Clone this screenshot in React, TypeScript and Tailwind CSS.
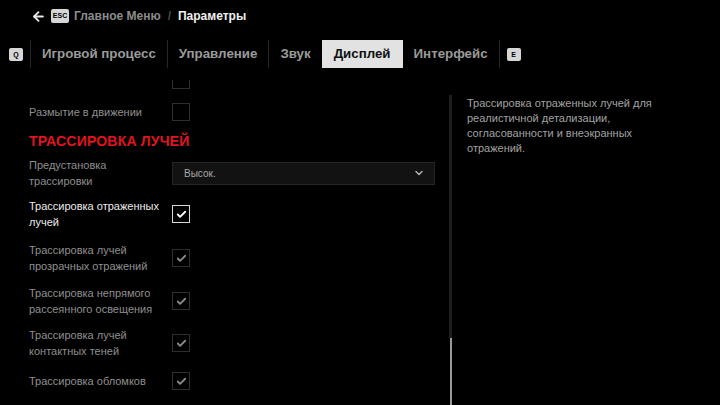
import { ArrowLeft, Check, ChevronDown } from 'lucide-react';

const font = { fontFamily: '"Liberation Sans", Arial, sans-serif' };

function KeyBadge({ label }: { label: string }) {
  return (
    <div className="w-[14px] h-[13px] rounded-[2px] bg-[#d6d6d6] text-black text-[7px] font-bold flex items-center justify-center leading-none">
      {label}
    </div>
  );
}

function Divider() {
  return <div className="w-px h-[28px] bg-[#262626]" />;
}

function Checkbox({ checked, active }: { checked?: boolean; active?: boolean }) {
  return (
    <div
      className={`w-[18px] h-[18px] border flex items-center justify-center shrink-0 ${
        active ? 'border-[#d8d8d8]' : 'border-[#2e2e2e]'
      }`}
    >
      {checked && (
        <Check size={11} strokeWidth={4} className={active ? 'text-white' : 'text-[#8a8a8a]'} />
      )}
    </div>
  );
}

function Row({
  label,
  h,
  checked,
  active,
  className = '',
}: {
  label: React.ReactNode;
  h: string;
  checked?: boolean;
  active?: boolean;
  className?: string;
}) {
  return (
    <div className={`flex items-center ${h} ${className}`}>
      <div className={`w-[143px] text-[11px] leading-[16px] ${active ? 'text-[#ececec]' : 'text-[#8f8f8f]'}`}>
        {label}
      </div>
      <Checkbox checked={checked} active={active} />
    </div>
  );
}

export default function App() {
  const tabs = ['Игровой процесс', 'Управление', 'Звук', 'Дисплей', 'Интерфейс'];
  const activeTab = 'Дисплей';

  return (
    <div className="w-[720px] h-[405px] bg-black overflow-hidden flex flex-col" style={font}>
      <div className="h-[32px] flex items-center pl-[31px] gap-[5px]">
        <ArrowLeft size={15} strokeWidth={3} className="text-[#e8e8e8]" />
        <div className="w-[18px] h-[14px] rounded-[2px] bg-[#d6d6d6] text-black text-[7px] font-bold flex items-center justify-center">
          ESC
        </div>
        <span className="text-[12px] font-bold text-[#8c8c8c]">Главное Меню</span>
        <span className="text-[12px] font-bold text-[#4a4a4a] mx-[2px]">/</span>
        <span className="text-[12px] font-bold text-[#f0f0f0]">Параметры</span>
      </div>

      <div className="h-[28px] mt-[8px] flex items-center pl-[9px]">
        <KeyBadge label="Q" />
        <div className="ml-[7px]" />
        {tabs.map((t, i) => {
          const active = t === activeTab;
          const nextActive = tabs[i + 1] === activeTab;
          return (
            <div key={t} className="flex items-center h-full">
              {!active && i === 0 && <Divider />}
              <div
                className={`h-full flex items-center text-[13.3px] font-bold ${
                  active ? 'bg-[#e2e2e2] text-[#111] px-[12px]' : 'text-[#9a9a9a] px-[11px]'
                }`}
              >
                {t}
              </div>
              {!active && !nextActive && <Divider />}
            </div>
          );
        })}
        <div className="ml-[7px]" />
        <KeyBadge label="E" />
      </div>

      <div className="flex-1 flex mt-[12px] overflow-hidden">
        <div className="w-[449px] pl-[29px] overflow-hidden">
          <Row label="" h="h-[32px]" className="-mt-[16px]" />
          <Row label="Размытие в движении" h="h-[32px]" />
          <div className="h-[26px] flex items-center text-[14px] font-bold text-[#e1141f] tracking-[0.2px]">
            ТРАССИРОВКА ЛУЧЕЙ
          </div>
          <div className="flex items-center h-[38px]">
            <div className="w-[143px] text-[11px] leading-[16px] text-[#8f8f8f]">
              Предустановка
              <br />
              трассировки
            </div>
            <div className="w-[263px] h-[23px] bg-[#121212] border border-[#252525] flex items-center justify-between pl-[11px] pr-[9px]">
              <span className="text-[10px] text-[#a8a8a8]">Высок.</span>
              <ChevronDown size={12} strokeWidth={3} className="text-[#b0b0b0]" />
            </div>
          </div>
          <Row
            h="h-[44px]"
            checked
            active
            label={
              <>
                Трассировка отраженных
                <br />
                лучей
              </>
            }
          />
          <Row
            h="h-[44px]"
            checked
            label={
              <>
                Трассировка лучей
                <br />
                прозрачных отражений
              </>
            }
          />
          <Row
            h="h-[42px]"
            checked
            label={
              <>
                Трассировка непрямого
                <br />
                рассеянного освещения
              </>
            }
          />
          <Row
            h="h-[42px]"
            checked
            label={
              <>
                Трассировка лучей
                <br />
                контактных теней
              </>
            }
          />
          <Row h="h-[34px]" checked label="Трассировка обломков" />
        </div>

        <div className="w-[3px] flex flex-col pt-[15px]">
          <div className="flex-1 bg-[#1e1e1e]" />
          <div className="h-[67px] w-[2px] mx-auto bg-[#9a9a9a]" />
        </div>

        <div className="flex-1 pl-[15px] pr-[30px] pt-[16px]">
          <p className="text-[11px] leading-[15px] text-[#a3a3a3] w-[220px]">
            Трассировка отраженных лучей для реалистичной детализации, согласованности и внеэкранных
            отражений.
          </p>
        </div>
      </div>
    </div>
  );
}
